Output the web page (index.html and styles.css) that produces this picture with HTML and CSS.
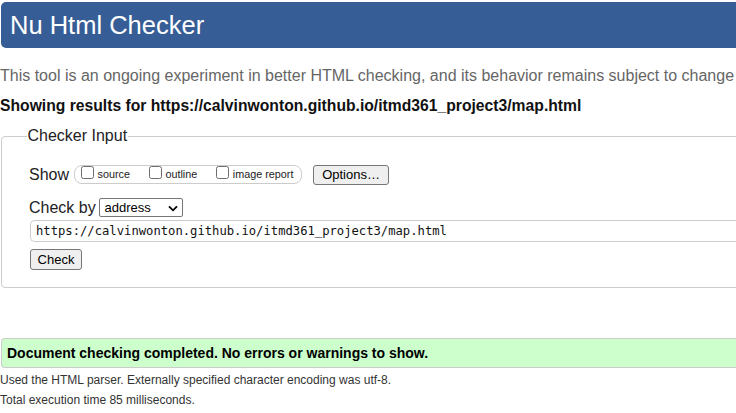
FILE: index.html
```html
<!DOCTYPE html>
<html lang="en">
<head>
<meta charset="utf-8">
<title>Showing results for https://calvinwonton.github.io/itmd361_project3/map.html - Nu Html Checker</title>
<link rel="stylesheet" href="styles.css">
</head>
<body>
<div class="page">
  <h1 class="title">Nu Html Checker</h1>
  <p class="intro">This tool is an ongoing experiment in better HTML checking, and its behavior remains subject to change</p>
  <p class="showing">Showing results for https://calvinwonton.github.io/itmd361_project3/map.html</p>
  <fieldset class="checker">
    <legend class="checker-legend">Checker Input</legend>
    <div class="row show-row">
      <span class="row-label">Show</span>
      <div class="show-group">
        <label class="opt"><span class="cb"></span><span class="opt-text">source</span></label>
        <label class="opt"><span class="cb"></span><span class="opt-text">outline</span></label>
        <label class="opt"><span class="cb"></span><span class="opt-text">image report</span></label>
      </div>
      <button class="btn btn-options" type="button">Options…</button>
    </div>
    <div class="row by-row">
      <span class="row-label">Check by</span>
      <div class="select">
        <span class="select-text">address</span>
        <svg class="chev" width="10" height="7" viewBox="0 0 10 7"><path d="M1 1.3 L5 5.3 L9 1.3" fill="none" stroke="#000" stroke-width="1.8"/></svg>
      </div>
    </div>
    <div class="url-input">https://calvinwonton.github.io/itmd361_project3/map.html</div>
    <div class="check-row"><button class="btn btn-check" type="button">Check</button></div>
  </fieldset>
  <div class="success">Document checking completed. No errors or warnings to show.</div>
  <p class="details">Used the HTML parser. Externally specified character encoding was utf-8.</p>
  <p class="details details-second">Total execution time 85 milliseconds.</p>
</div>
</body>
</html>
```

FILE: styles.css
```css
html, body {
  margin: 0;
  padding: 0;
  overflow: hidden;
  background: #fff;
}
body {
  font-family: "Liberation Sans", Arial, sans-serif;
  color: #222;
}
.page {
  width: 780px;
  padding-top: 2px;
}
.title {
  margin: 0 0 0 1px;
  height: 46px;
  box-sizing: border-box;
  background: #365d95;
  color: #fff;
  border-radius: 5px 0 0 5px;
  font-weight: normal;
  font-size: 25.5px;
  line-height: 46px;
  padding-left: 9px;
}
.intro {
  margin: 18px 0 0 0;
  font-size: 16px;
  line-height: 20px;
  color: #666;
  white-space: nowrap;
}
.showing {
  margin: 10px 0 0 0;
  font-size: 15.7px;
  line-height: 20px;
  font-weight: bold;
  color: #111;
  white-space: nowrap;
}
.checker {
  margin: 11px 0 0 1px;
  border: 1px solid #ccc;
  border-radius: 4px 0 0 4px;
  padding: 19px 0 17px 27px;
  min-width: 0;
}
.checker-legend {
  font-size: 16px;
  line-height: 18px;
  color: #222;
  padding: 0 1px;
  margin-left: -2.5px;
}
.row {
  display: flex;
  align-items: center;
}
.row-label {
  font-size: 16px;
  color: #222;
  white-space: nowrap;
  flex-shrink: 0;
}
.show-row {
  height: 21px;
}
.show-group {
  display: flex;
  align-items: flex-start;
  flex-shrink: 0;
  margin-left: 4.5px;
  height: 17px;
  width: 215px;
  border: 1px solid #ccc;
  border-radius: 8px;
  padding: 0 5px 0 6.5px;
}
.opt {
  display: flex;
  align-items: flex-start;
  flex-shrink: 0;
  white-space: nowrap;
  margin-right: 19px;
}
.opt:last-child { margin-right: 0; }
.cb {
  width: 13px;
  height: 13px;
  flex-shrink: 0;
  box-sizing: border-box;
  border: 1px solid #6d6d6d;
  border-radius: 2.5px;
  background: #fff;
  margin-top: -0.5px;
}
.opt-text {
  font-size: 10.8px;
  line-height: 13px;
  color: #222;
  margin-left: 3.5px;
  margin-top: 1.5px;
}
.btn {
  font-family: "Liberation Sans", Arial, sans-serif;
  font-size: 13px;
  color: #000;
  background: #efefef;
  border: 1px solid #767676;
  border-radius: 3px;
  padding: 0;
  box-sizing: border-box;
  line-height: 18px;
  flex-shrink: 0;
}
.btn-options {
  margin-left: 11px;
  width: 76px;
  height: 20px;
}
.by-row {
  margin-top: 13px;
  height: 19px;
}
.select {
  margin-left: 3.3px;
  width: 84px;
  height: 19px;
  box-sizing: border-box;
  border: 1px solid #767676;
  border-radius: 2px;
  display: flex;
  align-items: center;
  justify-content: space-between;
  padding: 0 4px 0 4.5px;
  font-size: 13px;
  color: #000;
}
.chev {
  margin-top: 1px;
}
.url-input {
  margin-top: 3px;
  margin-left: 1px;
  height: 22px;
  box-sizing: border-box;
  border: 1px solid #ccc;
  border-right: none;
  border-radius: 5px 0 0 5px;
  font-family: "DejaVu Sans Mono", "Liberation Mono", monospace;
  font-size: 12.2px;
  line-height: 20px;
  padding-left: 5px;
  color: #111;
  white-space: nowrap;
}
.check-row {
  display: flex;
  margin-top: 7px;
  margin-left: 1px;
}
.btn-check {
  width: 52px;
  height: 21px;
}
.success {
  margin: 50px 0 0 1px;
  height: 30px;
  box-sizing: border-box;
  background: #ccffcc;
  border-top: 1px solid #ccc;
  border-bottom: 1px solid #ccc;
  border-left: 1px solid #ccc;
  border-radius: 4px 0 0 4px;
  font-weight: bold;
  font-size: 14px;
  line-height: 28px;
  padding-left: 5px;
  color: #000;
  white-space: nowrap;
}
.details {
  margin: 5px 0 0 0;
  font-size: 12px;
  line-height: 14px;
  color: #333;
}
.details-second {
  margin-top: 6px;
}
```
